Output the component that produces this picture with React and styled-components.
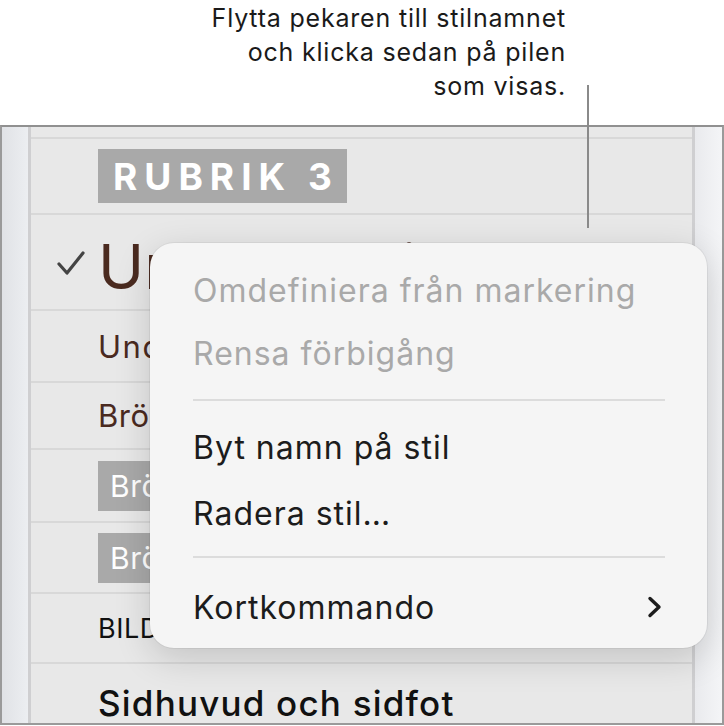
import React from "react";
import styled, { createGlobalStyle } from "styled-components";

const Global = createGlobalStyle`
  html, body { margin: 0; padding: 0; background: #ffffff; }
  body { font-family: Inter, "Noto Sans", "Liberation Sans", sans-serif; }
  * { box-sizing: border-box; }
`;

const Page = styled.div`
  position: relative;
  width: 724px;
  height: 726px;
  overflow: hidden;
  display: flex;
  flex-direction: column;
`;

const Callout = styled.div`
  height: 125px;
  padding: 1px 0 0 0;
  width: 566px;
  text-align: right;
  font-size: 25px;
  line-height: 34px;
  color: #1a1a1a;
  letter-spacing: 0.8px;
`;

const Leader = styled.div`
  position: absolute;
  left: 587px;
  top: 85px;
  width: 2px;
  height: 143px;
  background: #8a8a8a;
  z-index: 3;
`;

const Frame = styled.div`
  flex: 1;
  display: flex;
  border-top: 2px solid #909090;
  border-left: 2px solid #9a9a9a;
  border-right: 2px solid #9a9a9a;
  border-bottom: 2px solid #9a9a9a;
  margin-bottom: 1px;
  overflow: hidden;
`;

const Strip = styled.div`
  width: ${(p) => p.$w}px;
  flex: none;
  background: ${(p) =>
    p.$side === "left"
      ? "linear-gradient(90deg, #e0e2e6, #eceef1)"
      : "linear-gradient(90deg, #e9eaed, #f4f5f7)"};
  border-${(p) => (p.$side === "left" ? "right" : "left")}: 3px solid #cfcfd1;
`;

const Panel = styled.div`
  flex: 1;
  background: #e8e8e8;
  display: flex;
  flex-direction: column;
  overflow: hidden;
`;

const Row = styled.div`
  height: ${(p) => p.$h}px;
  flex: none;
  display: flex;
  align-items: center;
  padding-left: 67px;
  padding-top: ${(p) => p.$shift || 0}px;
  border-bottom: 2px solid #d8d8d8;
  position: relative;
  white-space: nowrap;
`;

const Check = styled.svg`
  position: absolute;
  left: 25px;
  top: 33px;
`;

const Label = styled.span`
  font-size: ${(p) => p.$size}px;
  font-weight: ${(p) => p.$weight || 400};
  color: ${(p) => p.$color || "#111"};
  letter-spacing: ${(p) => p.$spacing || 0}px;
  line-height: 1;
`;

const Chip = styled.span`
  display: inline-flex;
  align-items: center;
  height: ${(p) => p.$h}px;
  padding: 0 ${(p) => p.$pad}px 0 ${(p) => p.$padL}px;
  background: #a9a9a9;
  color: #ffffff;
  font-size: ${(p) => p.$size}px;
  font-weight: ${(p) => p.$weight || 400};
  letter-spacing: ${(p) => p.$spacing || 0}px;
  line-height: 1;
`;

const Menu = styled.div`
  position: absolute;
  left: 150px;
  top: 243px;
  width: 557px;
  height: 405px;
  border-radius: 24px;
  background: #f5f5f5;
  box-shadow: 0 10px 36px rgba(0, 0, 0, 0.16), 0 0 0 1px rgba(0, 0, 0, 0.05);
  padding: 16px 42px 8px 43px;
  display: flex;
  flex-direction: column;
  z-index: 2;
`;

const Item = styled.div`
  height: ${(p) => p.$h}px;
  display: flex;
  align-items: center;
  justify-content: space-between;
  font-size: 32px;
  letter-spacing: 1px;
  color: ${(p) => (p.$disabled ? "#a9a9a9" : "#1c1c1c")};
  white-space: nowrap;
`;

const Separator = styled.div`
  height: 2px;
  background: #dcdcdc;
  margin: ${(p) => p.$top}px 0 ${(p) => p.$bottom}px;
`;

const Chevron = () => (
  <svg width="17" height="24" viewBox="0 0 17 24" style={{ marginRight: 2 }}>
    <path d="M4 3.5 L13 12 L4 20.5" fill="none" stroke="#1c1c1c" strokeWidth="3.4" strokeLinecap="round" strokeLinejoin="round" />
  </svg>
);

export default function App() {
  return (
    <>
      <Global />
      <Page>
        <Callout>
          Flytta pekaren till stilnamnet
          <br />
          och klicka sedan på pilen
          <br />
          som visas.
        </Callout>
        <Leader />
        <Frame>
          <Strip $w={29} $side="left" />
          <Panel>
            <Row $h={12} />
            <Row $h={76}>
              <Chip $h={54} $padL={15} $pad={8} $size={37} $weight={700} $spacing={7}>
                RUBRIK 3
              </Chip>
            </Row>
            <Row $h={96} $shift={10}>
              <Check width="30" height="30" viewBox="0 0 30 30">
                <path d="M3 16 L11 25 L27 5" fill="none" stroke="#444" strokeWidth="3.2" strokeLinecap="round" strokeLinejoin="round" />
              </Check>
              <Label $size={62} $color="#4a2a1f">Underrubrik</Label>
            </Row>
            <Row $h={72}>
              <Label $size={31} $color="#4a2a1f" $spacing={1.5}>Underrubrik</Label>
            </Row>
            <Row $h={67}>
              <Label $size={31} $color="#4a2a1f" $spacing={0.5}>Brödtext</Label>
            </Row>
            <Row $h={73}>
              <Chip $h={50} $padL={12} $pad={10} $size={30} $spacing={0.5}>
                Brödtext
              </Chip>
            </Row>
            <Row $h={71}>
              <Chip $h={50} $padL={12} $pad={10} $size={30} $spacing={0.5}>
                Brödtext
              </Chip>
            </Row>
            <Row $h={70}>
              <Label $size={27} $color="#111" $spacing={0.5}>BILDTEXT</Label>
            </Row>
            <Row $h={80}>
              <Label $size={35} $weight={500} $color="#111" $spacing={1.2}>Sidhuvud och sidfot</Label>
            </Row>
          </Panel>
          <Strip $w={30} $side="right" />
        </Frame>
        <Menu>
          <Item $h={63} $disabled>Omdefiniera från markering</Item>
          <Item $h={63} $disabled>Rensa förbigång</Item>
          <Separator $top={14} $bottom={13} />
          <Item $h={66}>Byt namn på stil</Item>
          <Item $h={66}>Radera stil…</Item>
          <Separator $top={10} $bottom={16} />
          <Item $h={66}>
            Kortkommando
            <Chevron />
          </Item>
        </Menu>
      </Page>
    </>
  );
}
